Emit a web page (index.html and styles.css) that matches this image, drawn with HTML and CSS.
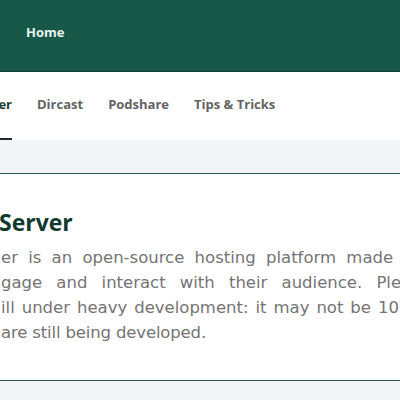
FILE: index.html
```html
<!DOCTYPE html>
<html lang="en">
<head>
<meta charset="utf-8">
<title>Podcast Server</title>
<link rel="stylesheet" href="styles.css">
</head>
<body>
<header class="topbar">
  <nav class="topnav"><a class="toplink" href="#">Home</a></nav>
</header>
<nav class="tabs">
  <a class="tab tab-active" href="#"><span>Podcast Server</span></a>
  <a class="tab" href="#">Dircast</a>
  <a class="tab" href="#">Podshare</a>
  <a class="tab" href="#">Tips &amp; Tricks</a>
</nav>
<main class="page">
  <section class="card">
    <h1 class="title"><span class="lead">Podcast&nbsp;</span><span>Server</span></h1>
    <p class="text">
      <span class="ln ln-1"><span class="lead">Podcast Serv</span><span>er is an open-source hosting platform made for podcasters, allowing</span></span>
      <span class="ln ln-2"><span class="lead">them to en</span><span>gage and interact with their audience. Please note that</span></span>
      <span class="ln ln-3"><span class="lead">Podcast Server is st</span><span>ill under heavy development: it may not be 100% stable and</span></span>
      <span class="ln ln-4"><span class="lead">some features&nbsp;</span><span>are still being developed.</span></span>
    </p>
  </section>
</main>
</body>
</html>
```
FILE: styles.css
```css
html, body {
  margin: 0;
  padding: 0;
}
body {
  width: 400px;
  height: 400px;
  overflow: hidden;
  background: #f3f4f6;
  font-family: "Open Sans", "DejaVu Sans", sans-serif;
}
a { text-decoration: none; }

.topbar {
  height: 71px;
  background: #185849;
  border-bottom: 1px solid #0f3f35;
}
.topnav {
  display: flex;
  padding: 23px 0 0 26px;
}
.toplink {
  color: #e8f5ef;
  font-weight: 700;
  font-size: 13px;
  line-height: 18px;
}

.tabs {
  display: flex;
  gap: 25px;
  background: #ffffff;
  white-space: nowrap;
}
.tab {
  padding: 23px 0 25px;
  border-bottom: 2px solid transparent;
  color: #636363;
  font-weight: 700;
  font-size: 13px;
  line-height: 18px;
}
.tab-active {
  display: flex;
  justify-content: flex-end;
  width: 12px;
  color: #183d33;
  border-bottom-color: #1d2a26;
}

.page {
  padding-top: 33px;
}
.card {
  margin: 0 -10px;
  padding: 33px 10px 35px;
  background: #ffffff;
  border: 1px solid #2b5449;
}

.lead {
  display: flex;
  justify-content: flex-end;
  width: 0;
  margin: 0 2px 0 -2px;
  white-space: pre;
}

.title {
  display: flex;
  margin: 0 0 0 -2px;
  color: #113a2f;
  font-size: 23px;
  line-height: 30px;
  font-weight: 700;
  white-space: nowrap;
}

.text {
  margin: 8px 0 0;
  color: #747474;
  font-family: "DejaVu Sans", sans-serif;
  font-size: 16.5px;
  line-height: 25px;
}
.ln {
  display: flex;
  white-space: nowrap;
}
.ln-1 { word-spacing: 5px; }
.ln-2 { word-spacing: 8.9px; }
.ln-3 { word-spacing: 1.7px; }
.ln-4 { letter-spacing: -0.15px; }
```
